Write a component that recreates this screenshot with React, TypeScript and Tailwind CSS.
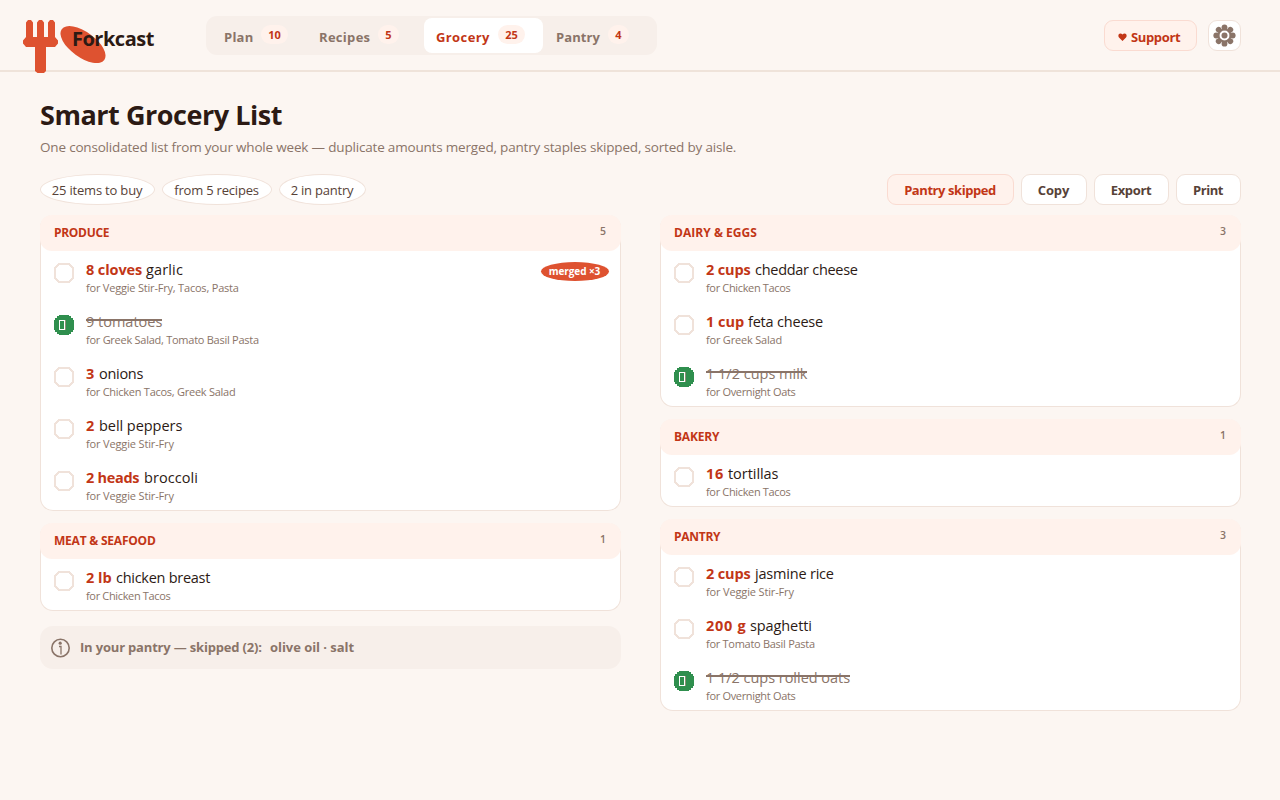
import type { ReactNode } from "react";

type Item = {
  qty: string;
  qtyClass?: string;
  name: string;
  nameClass?: string;
  recipes: string;
  recipesClass?: string;
  done?: boolean;
  merged?: string;
};

const produce: Item[] = [
  { qty: "8 cloves", qtyClass: "w-[60px] tracking-[-0.1px]", name: "garlic", nameClass: "tracking-[0.15px]", recipes: "for Veggie Stir-Fry, Tacos, Pasta", recipesClass: "tracking-[-0.2px]", merged: "merged ×3" },
  { qty: "", name: "9 tomatoes", nameClass: "tracking-[0px]", recipes: "for Greek Salad, Tomato Basil Pasta", recipesClass: "tracking-[-0.26px]", done: true },
  { qty: "3", qtyClass: "w-[13px]", name: "onions", nameClass: "tracking-[-0.3px]", recipes: "for Chicken Tacos, Greek Salad", recipesClass: "tracking-[-0.26px]" },
  { qty: "2", qtyClass: "w-[13px]", name: "bell peppers", nameClass: "tracking-[-0.05px]", recipes: "for Veggie Stir-Fry", recipesClass: "tracking-[-0.15px]" },
  { qty: "2 heads", qtyClass: "w-[58px] tracking-[-0.3px]", name: "broccoli", nameClass: "tracking-[0.05px]", recipes: "for Veggie Stir-Fry", recipesClass: "tracking-[-0.15px]" },
];

const meat: Item[] = [
  { qty: "2 lb", qtyClass: "w-[30px]", name: "chicken breast", nameClass: "tracking-[-0.27px]", recipes: "for Chicken Tacos", recipesClass: "tracking-[-0.34px]" },
];

const dairy: Item[] = [
  { qty: "2 cups", qtyClass: "w-[49px] tracking-[-0.15px]", name: "cheddar cheese", nameClass: "tracking-[-0.28px]", recipes: "for Chicken Tacos", recipesClass: "tracking-[-0.34px]" },
  { qty: "1 cup", qtyClass: "w-[42px]", name: "feta cheese", nameClass: "tracking-[-0.2px]", recipes: "for Greek Salad", recipesClass: "tracking-[-0.2px]" },
  { qty: "", name: "1 1/2 cups milk", nameClass: "tracking-[0px]", recipes: "for Overnight Oats", recipesClass: "tracking-[-0.32px]", done: true },
];

const bakery: Item[] = [
  { qty: "16", qtyClass: "w-[22px] tracking-[0.8px]", name: "tortillas", nameClass: "tracking-[-0.05px]", recipes: "for Chicken Tacos", recipesClass: "tracking-[-0.34px]" },
];

const pantry: Item[] = [
  { qty: "2 cups", qtyClass: "w-[49px] tracking-[-0.15px]", name: "jasmine rice", nameClass: "tracking-[-0.2px]", recipes: "for Veggie Stir-Fry", recipesClass: "tracking-[-0.15px]" },
  { qty: "200 g", qtyClass: "w-[44px] tracking-[0.7px]", name: "spaghetti", nameClass: "tracking-[-0.1px]", recipes: "for Tomato Basil Pasta", recipesClass: "tracking-[-0.28px]" },
  { qty: "", name: "1 1/2 cups rolled oats", nameClass: "tracking-[-0.03px]", recipes: "for Overnight Oats", recipesClass: "tracking-[-0.32px]", done: true },
];

function Checkbox({ done }: { done?: boolean }) {
  return (
    <svg className="mt-3 size-5 shrink-0" viewBox="0 0 20 20" shapeRendering="crispEdges">
      {done ? (
        <>
          <path d="M5 0H15V1H17V3H19V5H20V15H19V17H17V19H15V20H5V19H3V17H1V15H0V5H1V3H3V1H5Z" fill="#2f8f4e" />
          <rect x="5.5" y="5.5" width="5" height="9" fill="none" stroke="#ffffff" />
          <rect x="11" y="5" width="1" height="10" fill="#8a8f75" />
        </>
      ) : (
        <path d="M5 1H15L16.500 2.500L17.500 3.500L19 5V15L17.500 16.500L16.500 17.500L15 19H5L3.500 17.500L2.500 16.500L1 15V5L2.500 3.500L3.500 2.500Z" fill="#ffffff" stroke="#f0e2da" strokeWidth="2" />
      )}
    </svg>
  );
}

function Row({ item }: { item: Item }) {
  return (
    <li className="flex h-[52px] pl-[13px] pr-[11px]">
      <Checkbox done={item.done} />
      <div className="ml-3 flex-1 pt-2">
        <div className="flex h-[21px] text-[14.5px] leading-[21px] whitespace-pre">
          {item.qty && <span className={`block font-bold text-[#c23616] ${item.qtyClass ?? ""}`}>{item.qty}</span>}
          <span className={`relative block ${item.done ? "text-[#8a7468]" : "text-[#2c1a14]"} ${item.nameClass ?? ""}`}>
            {item.name}
            {item.done && <span className="absolute top-2 left-0 h-0.5 w-full bg-[#8a7468]" />}
          </span>
        </div>
        <div className={`text-[11px] leading-4 text-[#8a7468] ${item.recipesClass ?? ""}`}>{item.recipes}</div>
      </div>
      {item.merged && (
        <span className="mt-[11px] flex h-[19px] w-[68px] items-center justify-center rounded-[50%] bg-[#de5230] pr-px pb-0.5 text-[10px] leading-none font-bold tracking-[-0.1px] text-white">
          {item.merged}
        </span>
      )}
    </li>
  );
}

function Aisle({ title, count, items, titleClass }: { title: string; count: number; items: Item[]; titleClass: string }) {
  return (
    <section className="rounded-[13px] border border-t-0 border-[#f0e2da] bg-white">
      <header className="-mx-px flex h-9 items-center justify-between rounded-[12px] bg-[#fff2ec] pr-[15px] pb-px pl-3.5">
        <h2 className={`text-xs font-bold text-[#c23616] ${titleClass}`}>{title}</h2>
        <span className="pb-px text-[10.5px] font-semibold text-[#8a7468]">{count}</span>
      </header>
      <ul className="-mb-px">
        {items.map((item) => (
          <Row key={item.name} item={item} />
        ))}
      </ul>
    </section>
  );
}

function Tab({ label, count, active, className, badgeClass, textClass }: { label: string; count: number; active?: boolean; className: string; badgeClass: string; textClass: string }) {
  return (
    <button className={`flex h-[35px] items-center justify-between rounded-lg ${active ? "bg-white text-[#c23616]" : "text-[#8a7468]"} ${className}`}>
      <span className={`pt-[3px] text-[13px] leading-none font-bold ${textClass}`}>{label}</span>
      <span className={`mb-0.5 flex h-[19px] items-center justify-center rounded-full bg-[#fff2ec] text-[11px] leading-none font-bold text-[#c23616] ${badgeClass}`}>
        {count}
      </span>
    </button>
  );
}

function Pill({ children, className }: { children: ReactNode; className: string }) {
  return (
    <span className={`flex h-[31px] items-center justify-center rounded-[50%] border border-[#f0e2da] bg-white pt-0.5 pr-px text-[13px] text-[#574238] ${className}`}>
      {children}
    </span>
  );
}

function Action({ children, className }: { children: ReactNode; className: string }) {
  return (
    <button className={`flex h-[31px] items-center justify-center rounded-[9px] border pt-0.5 pr-px text-[13px] font-bold ${className}`}>
      {children}
    </button>
  );
}

function Logo() {
  return (
    <svg className="mt-5 h-[53px] w-[84px] shrink-0" viewBox="22 20 84 53" fill="#de5230">
      <path d="M28 20H31L33 22.500V37H37V22.500L39 20H42L44 22.500V37H48V22.500L50 20H53L55 22.500V37L58 40.500V43.500L55 47H46V71L44 73H37.500L35 71V47H26L23 43.500V40.500L26 37V22.500Z" />
      <ellipse cx="83" cy="44.600" rx="26.300" ry="12.600" transform="rotate(36 83 44.600)" />
    </svg>
  );
}

const petals = [0, 45, 90, 135, 180, 225, 270, 315];

function Gear() {
  return (
    <svg className="size-[23px]" viewBox="-11.5 -11.5 23 23">
      <circle r="6" fill="none" stroke="#8a7468" strokeWidth="2" />
      {petals.map((angle) => (
        <circle key={angle} cy="-8.200" r="2.900" fill="#8a7468" transform={`rotate(${angle})`} />
      ))}
      <circle r="3" fill="#8a7468" />
    </svg>
  );
}

export default function App() {
  return (
    <div className="flex h-[800px] w-[1280px] flex-col overflow-hidden bg-[#fcf6f2] font-['Open_Sans','Noto_Sans',sans-serif] text-[#2c1a14]">
      <header className="flex h-[72px] items-start border-b-2 border-[#efe3da] pl-[22px]">
        <Logo />
        <span className="relative mt-[25px] -ml-[34px] w-[134px] text-[20px] leading-[28px] font-bold tracking-[-0.5px]">Forkcast</span>
        <nav className="mt-4 flex h-[39px] w-[451px] items-center rounded-[11px] bg-[#f7efea]">
          <Tab label="Plan" count={10} className="ml-[18px] w-16" textClass="tracking-[0.24px]" badgeClass="w-[27px]" />
          <Tab label="Recipes" count={5} className="ml-[31px] w-20" textClass="tracking-[0.3px]" badgeClass="w-[21px]" />
          <Tab label="Grocery" count={25} active className="ml-[25px] w-[119px] pr-[18px] pl-3" textClass="tracking-[0.4px]" badgeClass="w-[27px]" />
          <Tab label="Pantry" count={4} className="ml-[13px] w-[73px]" textClass="tracking-[0.1px]" badgeClass="w-[21px]" />
        </nav>
        <button className="mt-5 ml-auto flex h-[31px] w-[93px] items-center rounded-[9px] border border-[#fadbd1] bg-[#fff2ec] pl-[13px] text-[13px] font-bold text-[#c23616]">
          <svg className="mt-0.5 mr-1 h-2 w-[9px]" viewBox="0 0 9 8" fill="currentColor">
            <path d="M4.500 8L1 4.500C-.2 3 .4.500 2.300.500Q3.700.500 4.500 1.600Q5.300.500 6.700.500C8.600.500 9.200 3 8 4.500Z" />
          </svg>
          <span className="pt-1 tracking-[-0.36px]">Support</span>
        </button>
        <button className="mt-5 mr-[39px] ml-[11px] flex h-[31px] w-[33px] items-center justify-center rounded-[9px] border border-[#f0e2da] bg-white pr-px">
          <Gear />
        </button>
      </header>

      <main className="flex flex-col pr-[39px] pl-10">
        <h1 className="mt-6 h-9 text-[27px] leading-[38px] font-bold tracking-[-0.46px]">Smart Grocery List</h1>
        <p className="mt-[5px] text-[13.5px] leading-5 tracking-[-0.185px] text-[#8a7468]">
          One consolidated list from your whole week — duplicate amounts merged, pantry staples skipped, sorted by aisle.
        </p>

        <div className="mt-[17px] flex gap-[7px]">
          <Pill className="w-[115px] tracking-[-0.19px]">25 items to buy</Pill>
          <Pill className="w-[110px] tracking-[-0.2px]">from 5 recipes</Pill>
          <Pill className="w-[87px] tracking-[-0.22px]">2 in pantry</Pill>
          <Action className="ml-auto w-[127px] border-[#fadbd1] bg-[#fff2ec] tracking-[-0.43px] text-[#c23616]">Pantry skipped</Action>
          <Action className="w-[66px] border-[#f0e2da] bg-white tracking-[-0.15px] text-[#574238]">Copy</Action>
          <Action className="w-[75px] border-[#f0e2da] bg-white tracking-[-0.38px] text-[#574238]">Export</Action>
          <Action className="w-[65px] border-[#f0e2da] bg-white tracking-[-0.48px] text-[#574238]">Print</Action>
        </div>

        <div className="mt-2.5 grid grid-cols-2 items-start gap-[39px]">
          <div className="flex flex-col gap-3">
            <Aisle title="PRODUCE" titleClass="tracking-[-0.3px]" count={5} items={produce} />
            <Aisle title="MEAT & SEAFOOD" titleClass="tracking-[-0.22px]" count={1} items={meat} />
            <div className="mt-[3px] flex h-[43px] items-center rounded-[13px] bg-[#f7efea] pl-2.5 text-[13px] font-bold text-[#8a7468]">
              <svg className="mr-2.5 size-5" viewBox="0 0 20 20" fill="none">
                <circle cx="10.500" cy="10" r="8.700" stroke="currentColor" strokeWidth="1.600" />
                <path d="M9 8.500H11V16.500" stroke="currentColor" strokeWidth="1.300" />
                <circle cx="10.200" cy="5.200" r="1.600" fill="currentColor" />
              </svg>
              <span className="w-[190px] tracking-[-0.18px]">In your pantry — skipped (2):</span>
              <span className="tracking-[-0.05px]">olive oil · salt</span>
            </div>
          </div>
          <div className="flex flex-col gap-3">
            <Aisle title="DAIRY & EGGS" titleClass="tracking-[0.04px]" count={3} items={dairy} />
            <Aisle title="BAKERY" titleClass="tracking-[-0.2px]" count={1} items={bakery} />
            <Aisle title="PANTRY" titleClass="tracking-[-0.28px]" count={3} items={pantry} />
          </div>
        </div>
      </main>
    </div>
  );
}
